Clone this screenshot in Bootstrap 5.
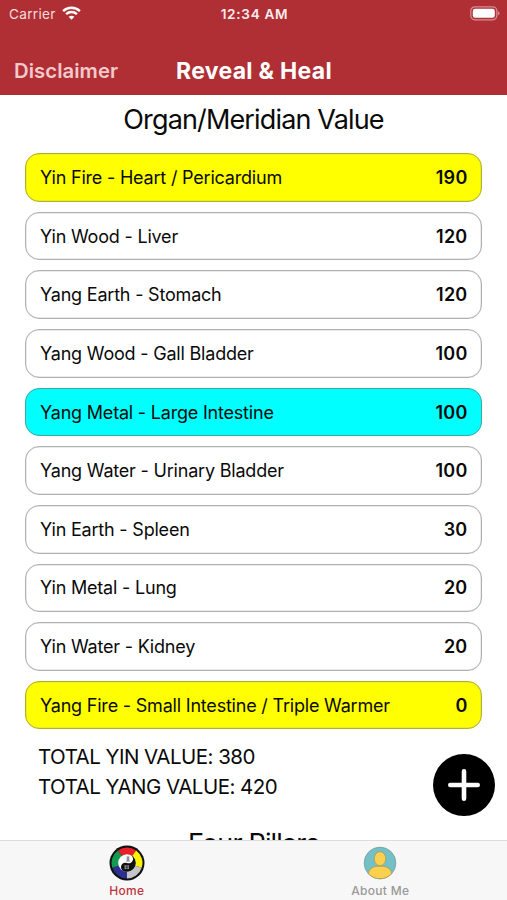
<!DOCTYPE html>
<html lang="en">
<head>
<meta charset="utf-8">
<meta name="viewport" content="width=device-width, initial-scale=1">
<title>Reveal &amp; Heal</title>
<link href="https://cdn.jsdelivr.net/npm/bootstrap@5.3.0/dist/css/bootstrap.min.css" rel="stylesheet">
<style>
html,body{height:100%}
body{font-family:Inter,"Liberation Sans",sans-serif;color:#0a0a0a}
.app{height:900px;width:507px}
.top-area{background:#b02f35;height:95px;color:#fff}
.status-line{height:28px;font-size:13.6px;padding:0 7px 0 9px}
.status-side{flex:1 1 0}
.wifi{margin:-2px 0 0 6px}
.battery{margin-top:-1px}
.carrier{color:#f6dcdd;letter-spacing:.3px}
.clock{font-weight:600;color:#fbeced;letter-spacing:.7px}
.title-line{height:46px;margin-top:20px;padding:0 14px}
.link-text{font-size:20.3px;font-weight:600;color:#f3c9cb;letter-spacing:.06px}
.screen-title{font-size:23px;font-weight:700;letter-spacing:.3px;padding-left:1px}
.section-title{font-size:27px;line-height:32px;font-weight:400;letter-spacing:-.85px}
.main-title{margin-top:9px}
.value-list{padding:0 25px;margin-top:17.2px;gap:10.15px}
.value-row{height:48.5px;border:1px solid #b0b0b0;box-shadow:inset 0 0 0 .5px #b0b0b080;border-radius:14px;padding:0 13.5px 0 14px;font-size:18px;letter-spacing:-.2px}
.fire{background:#ff0;border-color:#b4b41e}
.metal{background:#0ff;border-color:#1eb4b4}
.amount{font-weight:600;letter-spacing:.25px}
.totals{font-size:20.5px;line-height:30px;padding-left:38px;margin-top:12.7px;letter-spacing:-.52px}
.next-title{margin-top:26px}
.add-button{width:62px;height:62px;right:12px;top:754px;background:#000}
.tabs{height:60.5px;background:#f7f7f7;border-top:1px solid #dcdcdc;font-size:12px;line-height:14px;font-weight:500;color:#999;letter-spacing:.3px}
.tab-item{padding-top:4.5px;gap:2.5px}
.tab-on{color:#c0353d}
</style>
<script src="https://cdn.jsdelivr.net/npm/bootstrap@5.3.0/dist/js/bootstrap.bundle.min.js"></script>
</head>
<body>
<div class="app d-flex flex-column overflow-hidden position-relative bg-white">
  <header class="top-area flex-shrink-0">
    <div class="status-line d-flex align-items-center">
      <div class="status-side d-flex align-items-center"><span class="carrier">Carrier</span>
        <svg class="wifi" width="19" height="14" viewBox="0 0 19 14" fill="none" stroke="#fff" stroke-width="2.4"><path d="M1.100 5.100C5.800.6 13.200.6 17.900 5.100M4.100 8.200C7.200 5.300 11.800 5.300 14.900 8.200"/><path d="M9.500 13.700 6.600 10.800Q9.500 8.500 12.400 10.800Z" fill="#fff" stroke="none"/></svg>
      </div>
      <span class="clock">12:34 AM</span>
      <div class="status-side d-flex justify-content-end">
        <svg class="battery" width="31" height="15" viewBox="0 0 31 15"><rect x="1.800" y=".8" width="26" height="13" rx="4" fill="none" stroke="#d58f93" stroke-width="1.200"/><rect x="3.800" y="2.800" width="22" height="9" rx="2.200" fill="#fff"/><path d="M28.900 5v4.600q1.600-.8 1.600-2.300T28.900 5Z" fill="#d58f93"/></svg>
      </div>
    </div>
    <div class="title-line d-flex align-items-center">
      <div class="status-side"><span class="link-text">Disclaimer</span></div>
      <span class="screen-title">Reveal &amp; Heal</span>
      <div class="status-side"></div>
    </div>
  </header>
  <main class="flex-grow-1 overflow-hidden">
    <h1 class="section-title main-title text-center mb-0">Organ/Meridian Value</h1>
    <div class="value-list d-flex flex-column">
      <div class="value-row fire d-flex align-items-center justify-content-between"><span>Yin Fire - Heart / Pericardium</span><span class="amount">190</span></div>
      <div class="value-row d-flex align-items-center justify-content-between"><span>Yin Wood - Liver</span><span class="amount">120</span></div>
      <div class="value-row d-flex align-items-center justify-content-between"><span>Yang Earth - Stomach</span><span class="amount">120</span></div>
      <div class="value-row d-flex align-items-center justify-content-between"><span>Yang Wood - Gall Bladder</span><span class="amount">100</span></div>
      <div class="value-row metal d-flex align-items-center justify-content-between"><span>Yang Metal - Large Intestine</span><span class="amount">100</span></div>
      <div class="value-row d-flex align-items-center justify-content-between"><span>Yang Water - Urinary Bladder</span><span class="amount">100</span></div>
      <div class="value-row d-flex align-items-center justify-content-between"><span>Yin Earth - Spleen</span><span class="amount">30</span></div>
      <div class="value-row d-flex align-items-center justify-content-between"><span>Yin Metal - Lung</span><span class="amount">20</span></div>
      <div class="value-row d-flex align-items-center justify-content-between"><span>Yin Water - Kidney</span><span class="amount">20</span></div>
      <div class="value-row fire d-flex align-items-center justify-content-between"><span>Yang Fire - Small Intestine / Triple Warmer</span><span class="amount">0</span></div>
    </div>
    <div class="totals"><div>TOTAL YIN VALUE: 380</div><div>TOTAL YANG VALUE: 420</div></div>
    <h2 class="section-title next-title text-center mb-0">Four Pillars</h2>
  </main>
  <button class="add-button position-absolute rounded-circle border-0 p-0 d-flex align-items-center justify-content-center" aria-label="Add">
    <svg width="34" height="34" viewBox="0 0 34 34" stroke="#fff" stroke-width="4.600" stroke-linecap="round"><path d="M17 3.300v27.400M3.300 17h27.400"/></svg>
  </button>
  <footer class="tabs d-flex flex-shrink-0">
    <div class="tab-item tab-on w-50 d-flex flex-column align-items-center">
      <svg width="36" height="36" viewBox="-18 -18 36 36">
        <circle r="17.500" fill="#111"/>
        <path d="M0 0-9.100-12.500A15.500 15.500 0 0 1 9.100-12.500Z" fill="#e8202a"/>
        <path d="M0 0 9.100-12.500A15.500 15.500 0 0 1 14.700 4.800Z" fill="#fff200"/>
        <path d="M0 0 14.700 4.800A15.500 15.500 0 0 1 0 15.500Z" fill="#c3c5c8"/>
        <path d="M0 0V15.500A15.500 15.500 0 0 1-14.700 4.800Z" fill="#2b2f92"/>
        <path d="M0 0-14.700 4.800A15.500 15.500 0 0 1-9.100-12.500Z" fill="#129a4e"/>
        <circle r="8.800" fill="#fff"/>
        <path d="M0-8.800A8.800 8.800 0 0 1 0 8.800A4.400 4.400 0 0 1 0 0A4.400 4.400 0 0 0 0-8.800Z" fill="#111" transform="rotate(22)"/>
        <path d="M-.5-6h3M-.5-4h3M-.8-2h3.600M1-6v4" stroke="#555" stroke-width=".8"/>
        <path d="M-2.500 3h4.400M-2.500 5.200h4.400M-1.800 2.200v4M1.200 2.200v4" stroke="#bbb" stroke-width=".7"/>
      </svg>
      <span>Home</span>
    </div>
    <div class="tab-item w-50 d-flex flex-column align-items-center">
      <svg width="36" height="36" viewBox="-18 -18 36 36">
        <circle r="15.800" fill="#73c0c6" stroke="#7fa3a5"/>
        <path d="M-11.800 10.500C-10.500 4.500-6 3.700-3 3.200H3C6 3.700 10.500 4.500 11.800 10.500A15.800 15.800 0 0 1-11.800 10.500Z" fill="#fbd04f" stroke="#a39a5c" stroke-width=".8"/>
        <ellipse cy="-4.300" rx="5.800" ry="7" fill="#fbd04f" stroke="#a39a5c" stroke-width=".8"/>
      </svg>
      <span>About Me</span>
    </div>
  </footer>
</div>
</body>
</html>
